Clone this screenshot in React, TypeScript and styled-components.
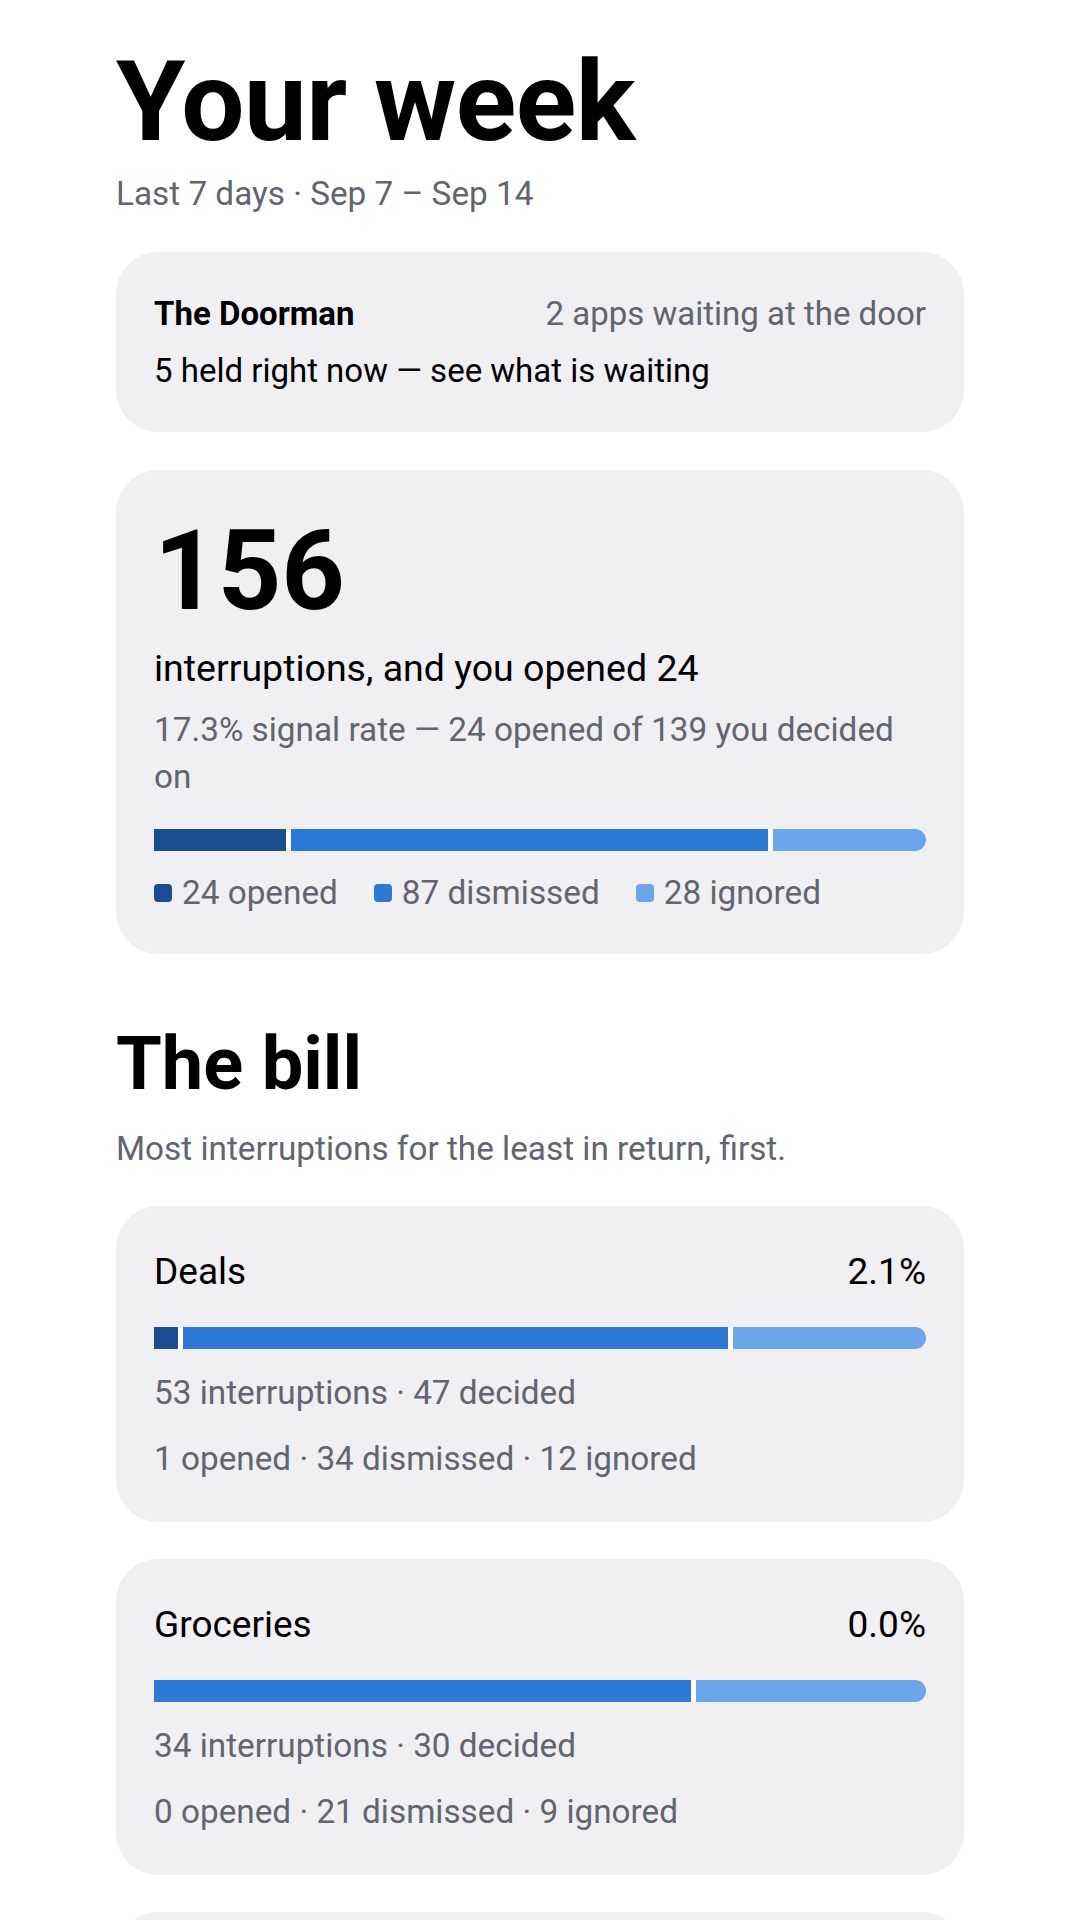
import styled, { createGlobalStyle } from "styled-components"

const GlobalStyle = createGlobalStyle`
	html, body {
		margin: 0;
		padding: 0;
		background: #ffffff;
	}
	body {
		font-family: Roboto, "Noto Sans", "Liberation Sans", sans-serif;
		color: #0b0b0c;
	}
	p, h1, h2 {
		margin: 0;
	}
`

const COLORS = {
	opened: "#1b4d93",
	dismissed: "#2c79d6",
	ignored: "#6ca6ea",
}

const Page = styled.div`
	width: 1080px;
	height: 1920px;
	box-sizing: border-box;
	padding: 40px 116px 0;
	overflow: hidden;
`

const Title = styled.h1`
	font-size: 112px;
	line-height: 123px;
	font-weight: 700;
	letter-spacing: -0.5px;
	color: #000;
`

const Subtitle = styled.p`
	margin-top: 11px;
	font-size: 33.3px;
	line-height: 40px;
	color: #62656d;
`

const Card = styled.section`
	margin-top: 38px;
	padding: 40px 38px 39px;
	background: #f0f0f3;
	border-radius: 42px;
`

const DoorRow = styled.div`
	display: flex;
	justify-content: space-between;
	align-items: baseline;
	line-height: 44px;
`

const DoorName = styled.span`
	font-size: 33px;
	font-weight: 700;
	color: #000;
`

const Muted = styled.span`
	font-size: 33px;
	color: #62656d;
`

const DoorLine = styled.p`
	margin-top: 13px;
	font-size: 33px;
	line-height: 44px;
	color: #000;
`

const BigNumber = styled.p`
	font-size: 111px;
	line-height: 123px;
	font-weight: 700;
	color: #000;
`

const Headline = styled.p`
	margin-top: 11px;
	font-size: 37.5px;
	line-height: 48px;
	color: #000;
`

const Detail = styled.p`
	margin-top: 14px;
	font-size: 33.3px;
	line-height: 47px;
	color: #62656d;
`

const Bar = styled.div<{ $top: number }>`
	display: flex;
	gap: 5px;
	height: 22px;
	margin-top: ${(p) => p.$top}px;
	background: #ffffff;
	border-radius: 0 11px 11px 0;
	overflow: hidden;
`

const Segment = styled.div<{ $color: string }>`
	background: ${(p) => p.$color};
	min-width: 24px;
	flex-basis: 0;
`

const Legend = styled.div`
	display: flex;
	gap: 36px;
	margin-top: 20px;
	font-size: 33.3px;
	line-height: 44px;
	color: #62656d;
`

const LegendItem = styled.div`
	display: flex;
	align-items: center;
	gap: 10px;
`

const Swatch = styled.span<{ $color: string }>`
	width: 18px;
	height: 18px;
	border-radius: 4px;
	background: ${(p) => p.$color};
`

const SectionTitle = styled.h2`
	margin-top: 66px;
	font-size: 74px;
	line-height: 87px;
	font-weight: 700;
	color: #000;
`

const SectionNote = styled.p`
	margin-top: 22px;
	font-size: 33.3px;
	line-height: 40px;
	color: #62656d;
`

const AppCard = styled(Card)`
	margin-top: 37px;
	padding: 40px 38px 39px;
`

const AppHead = styled.div`
	display: flex;
	justify-content: space-between;
	align-items: baseline;
	font-size: 37px;
	line-height: 51px;
	color: #000;
`

const StatLine = styled.p<{ $top: number }>`
	margin-top: ${(p) => p.$top}px;
	font-size: 33.3px;
	line-height: 48px;
	color: #62656d;
`

type Counts = { opened: number; dismissed: number; ignored: number }

function StackBar({ counts, top }: { counts: Counts; top: number }) {
	const parts = (["opened", "dismissed", "ignored"] as const).filter((k) => counts[k] > 0)
	return (
		<Bar $top={top}>
			{parts.map((k) => (
				<Segment key={k} $color={COLORS[k]} style={{ flexGrow: counts[k] }} />
			))}
		</Bar>
	)
}

const apps = [
	{ name: "Deals", total: 53, counts: { opened: 1, dismissed: 34, ignored: 12 } },
	{ name: "Groceries", total: 34, counts: { opened: 0, dismissed: 21, ignored: 9 } },
	{ name: "Fitness", total: 28, counts: { opened: 2, dismissed: 16, ignored: 6 } },
]

function AppBill({ name, total, counts }: { name: string; total: number; counts: Counts }) {
	const decided = counts.opened + counts.dismissed + counts.ignored
	const rate = ((counts.opened / decided) * 100).toFixed(1)
	return (
		<AppCard>
			<AppHead>
				<span>{name}</span>
				<span>{rate}%</span>
			</AppHead>
			<StackBar counts={counts} top={30} />
			<StatLine $top={20}>
				{total} interruptions · {decided} decided
			</StatLine>
			<StatLine $top={18}>
				{counts.opened} opened · {counts.dismissed} dismissed · {counts.ignored} ignored
			</StatLine>
		</AppCard>
	)
}

export default function App() {
	const week = { opened: 24, dismissed: 87, ignored: 28 }
	return (
		<Page>
			<GlobalStyle />
			<Title>Your week</Title>
			<Subtitle>Last 7 days · Sep 7 – Sep 14</Subtitle>

			<Card>
				<DoorRow>
					<DoorName>The Doorman</DoorName>
					<Muted>2 apps waiting at the door</Muted>
				</DoorRow>
				<DoorLine>5 held right now — see what is waiting</DoorLine>
			</Card>

			<Card>
				<BigNumber>156</BigNumber>
				<Headline>interruptions, and you opened 24</Headline>
				<Detail>17.3% signal rate — 24 opened of 139 you decided on</Detail>
				<StackBar counts={week} top={29} />
				<Legend>
					<LegendItem><Swatch $color={COLORS.opened} />24 opened</LegendItem>
					<LegendItem><Swatch $color={COLORS.dismissed} />87 dismissed</LegendItem>
					<LegendItem><Swatch $color={COLORS.ignored} />28 ignored</LegendItem>
				</Legend>
			</Card>

			<SectionTitle>The bill</SectionTitle>
			<SectionNote>Most interruptions for the least in return, first.</SectionNote>

			{apps.map((a) => (
				<AppBill key={a.name} {...a} />
			))}
		</Page>
	)
}
